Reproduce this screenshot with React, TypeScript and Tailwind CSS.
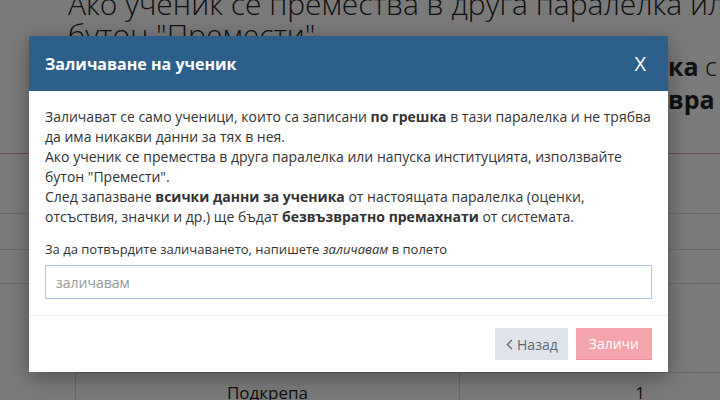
import { ChevronLeft } from 'lucide-react';

// ============================================================================
// Background page (partly hidden by the dialog)
// ============================================================================

function BackgroundPage() {
  return (
    <div className="h-[400px] overflow-hidden bg-white text-[#222]">
      <h1 className="mt-[-12px] pl-[68px] whitespace-nowrap text-[30px] font-light leading-[31px]">
        Ако ученик се премества в друга паралелка или напуска институцията,
        <br />
        бутон "Премести"
      </h1>

      <div className="pl-[668px] whitespace-nowrap text-[25px] leading-[33px]">
        <div>
          <b className="font-bold">ка</b> <span className="font-light">с</span>
        </div>
        <div>
          <b className="font-bold">вра</b>
        </div>
      </div>

      <div className="mt-[37px] border-t border-[#e2a2a2]" />
      <div className="h-[59px]" />
      <div className="h-[36px] border-t border-[#dcdcdc]" />
      <div className="h-[34px] border-t border-[#dcdcdc]" />
      <div className="h-[89px] border-t border-[#dcdcdc]" />

      {/* Table row */}
      <div className="ml-[75px] grid grid-cols-[384px_1fr] border-l border-t border-[#dcdcdc] text-[17px]">
        <div className="border-r border-[#dcdcdc] py-[7px] text-center">Подкрепа</div>
        <div className="py-[7px] pr-[75px] text-right">1</div>
      </div>
    </div>
  );
}

// ============================================================================
// Dialog
// ============================================================================

function DeleteStudentDialog() {
  return (
    <div className="absolute left-[29px] top-[36px] w-[639px] bg-white shadow-[0_5px_20px_rgba(0,0,0,0.35)]">
      {/* Header */}
      <div className="flex h-[55px] items-center justify-between bg-[#2c5f8a] pl-4 pr-[22px] text-white">
        <h2 className="text-[16px] font-bold">Заличаване на ученик</h2>
        <button className="text-[20px] leading-none">X</button>
      </div>

      {/* Body */}
      <div className="px-4 pb-4 pt-4 text-[#333]">
        <p className="text-[14px] leading-[20px]">
          Заличават се само ученици, които са записани <b className="font-bold">по грешка</b> в тази
          паралелка и не трябва да има никакви данни за тях в нея.
          <br />
          Ако ученик се премества в друга паралелка или напуска институцията, използвайте бутон
          "Премести".
          <br />
          След запазване <b className="font-bold">всички данни за ученика</b> от настоящата паралелка
          (оценки, отсъствия, значки и др.) ще бъдат{' '}
          <b className="font-bold">безвъзвратно премахнати</b> от системата.
        </p>

        <label className="mt-[13px] block text-[13px] leading-[18px]">
          За да потвърдите заличаването, напишете <i>заличавам</i> в полето
        </label>
        <input
          type="text"
          placeholder="заличавам"
          className="mt-[7px] block h-[34px] w-full border border-[#afc6df] px-[10px] text-[14px] text-[#333] outline-none placeholder:text-[#999]"
        />
      </div>

      {/* Footer */}
      <div className="flex justify-end gap-2 border-t border-[#edf0f3] px-4 pb-3 pt-3">
        <button className="flex h-8 items-center bg-[#dfe4ea] pl-[6px] pr-[10px] text-[14px] text-[#5f6670]">
          <ChevronLeft className="h-[17px] w-[17px]" strokeWidth={1.6} />
          <span className="-ml-[1px]">Назад</span>
        </button>
        <button className="h-8 border-b border-[#ef8f97] bg-[#f4a4aa] px-[13px] text-[14px] text-white">
          Заличи
        </button>
      </div>
    </div>
  );
}

// ============================================================================
// App
// ============================================================================

export default function App() {
  return (
    <div
      className="relative h-[400px] w-[720px] overflow-hidden"
      style={{ fontFamily: '"Open Sans", "Noto Sans", sans-serif' }}
    >
      <BackgroundPage />
      <div className="absolute inset-0 bg-black/[0.52]" />
      <DeleteStudentDialog />
    </div>
  );
}
